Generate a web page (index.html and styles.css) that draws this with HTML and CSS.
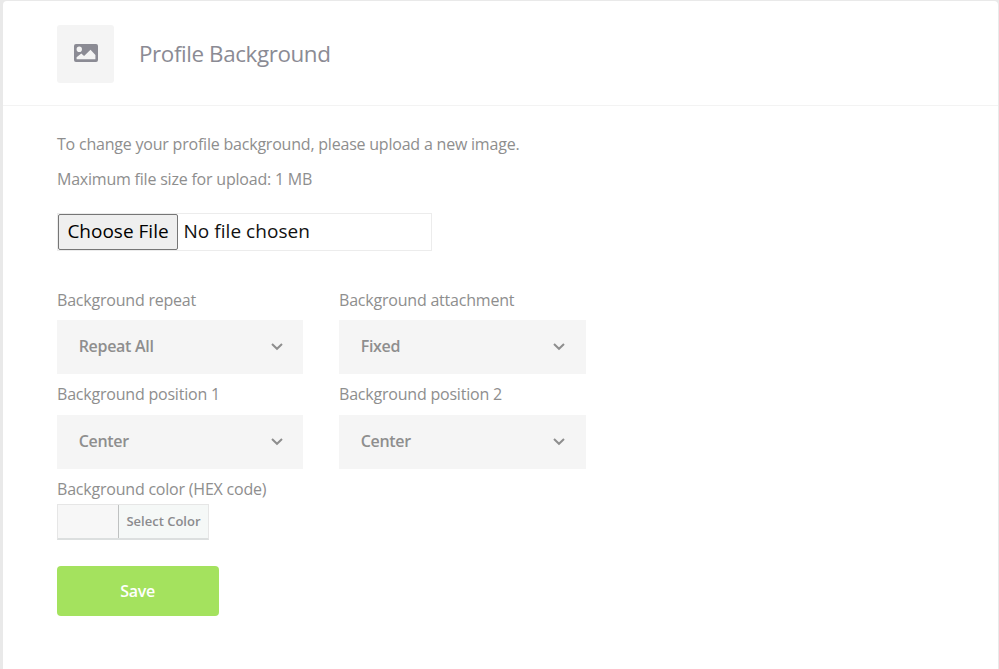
FILE: index.html
```html
<!DOCTYPE html>
<html lang="en">
<head>
<meta charset="utf-8">
<title>Profile Background</title>
<link rel="stylesheet" href="styles.css">
</head>
<body>
<main class="card">
  <header class="card-header">
    <span class="header-icon">
      <svg width="24" height="18" viewBox="0 0 25 18" preserveAspectRatio="none" aria-hidden="true"><path fill-rule="evenodd" d="M2 0H23Q25 0 25 2V16Q25 18 23 18H2Q0 18 0 16V2Q0 0 2 0ZM5.5 2.5A2.8 2.8 0 1 0 5.5 8.1A2.8 2.8 0 1 0 5.5 2.5ZM2.7 15.2H22.3V11L17.2 5.8L10.5 12L7.6 9.4L2.7 13.3Z"/></svg>
    </span>
    <h1>Profile Background</h1>
  </header>
  <form class="card-body">
    <p>To change your profile background, please upload a new image.</p>
    <p>Maximum file size for upload: 1 MB</p>
    <div class="file"><button type="button">Choose File</button><span>No file chosen</span></div>
    <div class="options">
      <div class="field">
        <label>Background repeat</label>
        <div class="select"><span>Repeat All</span><svg width="12" height="8" viewBox="0 0 12 8"><path d="M1 1L6 5.8L11 1"/></svg></div>
      </div>
      <div class="field">
        <label>Background attachment</label>
        <div class="select"><span>Fixed</span><svg width="12" height="8" viewBox="0 0 12 8"><path d="M1 1L6 5.8L11 1"/></svg></div>
      </div>
      <div class="field">
        <label>Background position 1</label>
        <div class="select"><span>Center</span><svg width="12" height="8" viewBox="0 0 12 8"><path d="M1 1L6 5.8L11 1"/></svg></div>
      </div>
      <div class="field">
        <label>Background position 2</label>
        <div class="select"><span>Center</span><svg width="12" height="8" viewBox="0 0 12 8"><path d="M1 1L6 5.8L11 1"/></svg></div>
      </div>
    </div>
    <label>Background color (HEX code)</label>
    <button type="button" class="picker"><span>Select Color</span></button>
    <button type="button" class="save">Save</button>
  </form>
</main>
</body>
</html>
```
FILE: styles.css
```css
* { box-sizing: border-box; }
body {
  margin: 0;
  height: 669px;
  overflow: hidden;
  padding: 1px 1px 0 3px;
  background: #e9e9e9;
  font-family: "Open Sans", sans-serif;
  font-size: 16px;
  color: #8e8e8e;
}
button { font-family: inherit; margin: 0; }
.card {
  height: 668px;
  background: #fff;
  border-radius: 4px 4px 0 0;
}
.card-header {
  display: flex;
  align-items: center;
  gap: 25px;
  height: 105px;
  padding: 1px 54px 0;
  border-bottom: 1px solid #f3f3f3;
}
.header-icon {
  display: flex;
  justify-content: center;
  width: 57px;
  height: 58px;
  padding: 19px 0 0 1px;
  border-radius: 3px;
  background: #f4f4f4;
  fill: #8b8b94;
}
h1 {
  margin: 0;
  font-size: 22.4px;
  line-height: 30px;
  font-weight: 400;
  letter-spacing: -0.4px;
  color: #8b8b94;
}
.card-body { padding: 21px 54px 0; }
p {
  margin: 0;
  line-height: 35px;
  letter-spacing: -0.21px;
}
.file {
  display: flex;
  align-items: center;
  width: 375px;
  height: 38px;
  margin-top: 16px;
  border: 1px solid #ececec;
  font-size: 19px;
  color: #111;
}
.file button {
  width: 120px;
  height: 36px;
  padding: 0 0 2px;
  border: 1px solid #767676;
  border-radius: 2px;
  background: #efefef;
  font-size: 19px;
  color: #000;
}
.file span { margin-left: 5.5px; padding-bottom: 2px; letter-spacing: 0.04px; }
.options {
  display: grid;
  grid-template-columns: 246px 247px;
  column-gap: 36px;
  padding-top: 34px;
}
.field { height: 95px; }
.field:nth-child(-n+2) { height: 94px; }
label {
  display: block;
  height: 30px;
  line-height: 30px;
  letter-spacing: -0.21px;
}
.field label { height: 36px; }
.field:nth-child(-n+2) label { height: 35px; }
.select {
  display: flex;
  align-items: center;
  justify-content: space-between;
  height: 54px;
  padding: 0 20.5px 1px 21.7px;
  background: #f5f5f5;
  font-weight: 600;
  letter-spacing: -0.3px;
}
.field:nth-child(even) .select { padding-right: 21px; }
.select span { padding-bottom: 1px; }
.select svg { fill: none; stroke: #8e8e8e; stroke-width: 2; }
.picker {
  display: flex;
  width: 152px;
  height: 36px;
  padding: 0 0 0 60px;
  border: 1px solid #e6e6e6;
  border-bottom: 2px solid #dcdfdf;
  background: #f7f7f7;
  font-size: 13px;
  font-weight: 600;
  line-height: 33px;
  color: #8b8b8e;
}
.picker span {
  flex: 1;
  border-left: 1px solid #bfc1c1;
  background: #f5f8f7;
}
.save {
  display: block;
  width: 162px;
  height: 50px;
  margin-top: 26px;
  padding: 0 1px 0 0;
  border: 0;
  border-radius: 4px;
  background: #a4e25e;
  color: #fff;
  font-size: 16px;
  font-weight: 600;
  letter-spacing: -0.3px;
}
```
